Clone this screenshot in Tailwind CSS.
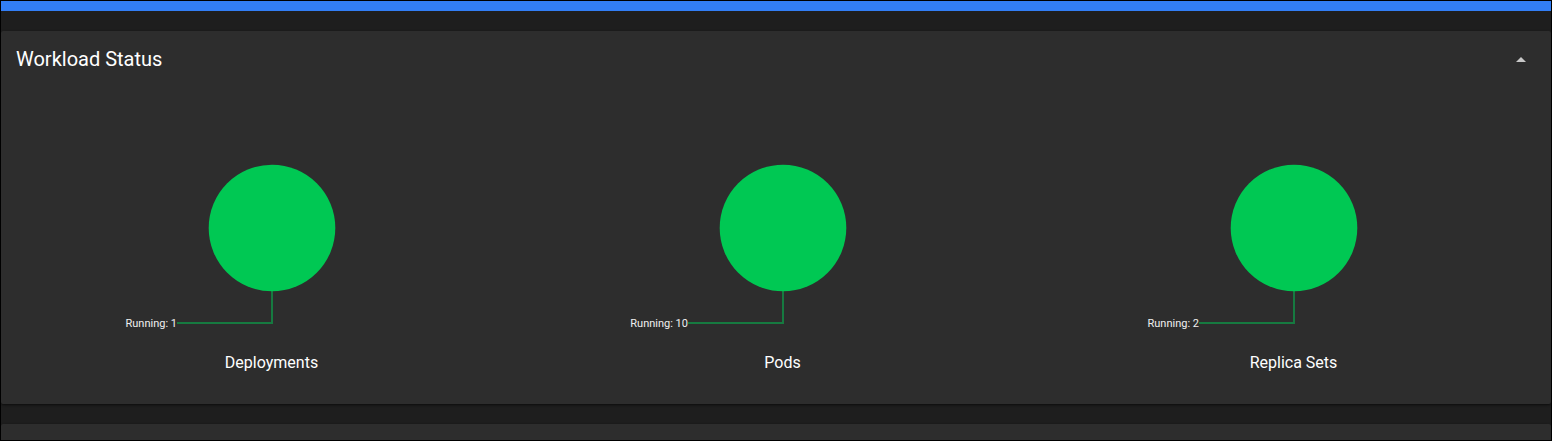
<!DOCTYPE html>
<html lang="en">
<head>
<meta charset="utf-8">
<title>Workload Status</title>
<script src="https://cdn.jsdelivr.net/npm/@tailwindcss/browser@4"></script>
</head>
<body class="min-h-screen flex flex-col bg-[#1e1e1e] border border-black text-white font-['Roboto',sans-serif]">
  <div class="h-[10px] bg-[#327ef5]"></div>
  <main class="grow flex flex-col gap-5 pt-5">
    <section class="bg-[#2d2d2d] rounded-xs shadow-sm shadow-black/50 pb-[29px]">
      <header class="flex items-center justify-between pl-[15px] pr-[18px] h-14">
        <h1 class="text-xl">Workload Status</h1>
        <button type="button" aria-label="Collapse" aria-expanded="true" class="size-6 flex items-center justify-center text-[#c8c8c8]">
          <svg class="size-6" viewBox="0 0 24 24" fill="currentColor"><path d="M7 15l5-5 5 5z"/></svg>
        </button>
      </header>
      <div class="grid grid-cols-3 pl-[15px] pr-[2px]">
        <figure class="flex flex-col items-center">
          <svg class="w-full h-[264px]" viewBox="0 0 511 264" role="img" aria-label="Deployments: 1 running">
            <circle cx="256" cy="141" r="63.3" fill="#00c853"/>
            <path d="M256 204v32h-95" fill="none" stroke="#00c853" stroke-opacity=".5" stroke-width="2"/>
            <text x="161" y="240" text-anchor="end" class="text-[11px]" fill="#f0f0f0">Running: 1</text>
          </svg>
          <figcaption class="text-base">Deployments</figcaption>
        </figure>
        <figure class="flex flex-col items-center">
          <svg class="w-full h-[264px]" viewBox="0 0 511 264" role="img" aria-label="Pods: 10 running">
            <circle cx="256" cy="141" r="63.3" fill="#00c853"/>
            <path d="M256 204v32h-95" fill="none" stroke="#00c853" stroke-opacity=".5" stroke-width="2"/>
            <text x="161" y="240" text-anchor="end" class="text-[11px]" fill="#f0f0f0">Running: 10</text>
          </svg>
          <figcaption class="text-base">Pods</figcaption>
        </figure>
        <figure class="flex flex-col items-center">
          <svg class="w-full h-[264px]" viewBox="0 0 511 264" role="img" aria-label="Replica Sets: 2 running">
            <circle cx="256" cy="141" r="63.3" fill="#00c853"/>
            <path d="M256 204v32h-95" fill="none" stroke="#00c853" stroke-opacity=".5" stroke-width="2"/>
            <text x="161" y="240" text-anchor="end" class="text-[11px]" fill="#f0f0f0">Running: 2</text>
          </svg>
          <figcaption class="text-base">Replica Sets</figcaption>
        </figure>
      </div>
    </section>
    <section class="grow bg-[#2d2d2d] rounded-t-xs shadow-sm shadow-black/50"></section>
  </main>
</body>
</html>
